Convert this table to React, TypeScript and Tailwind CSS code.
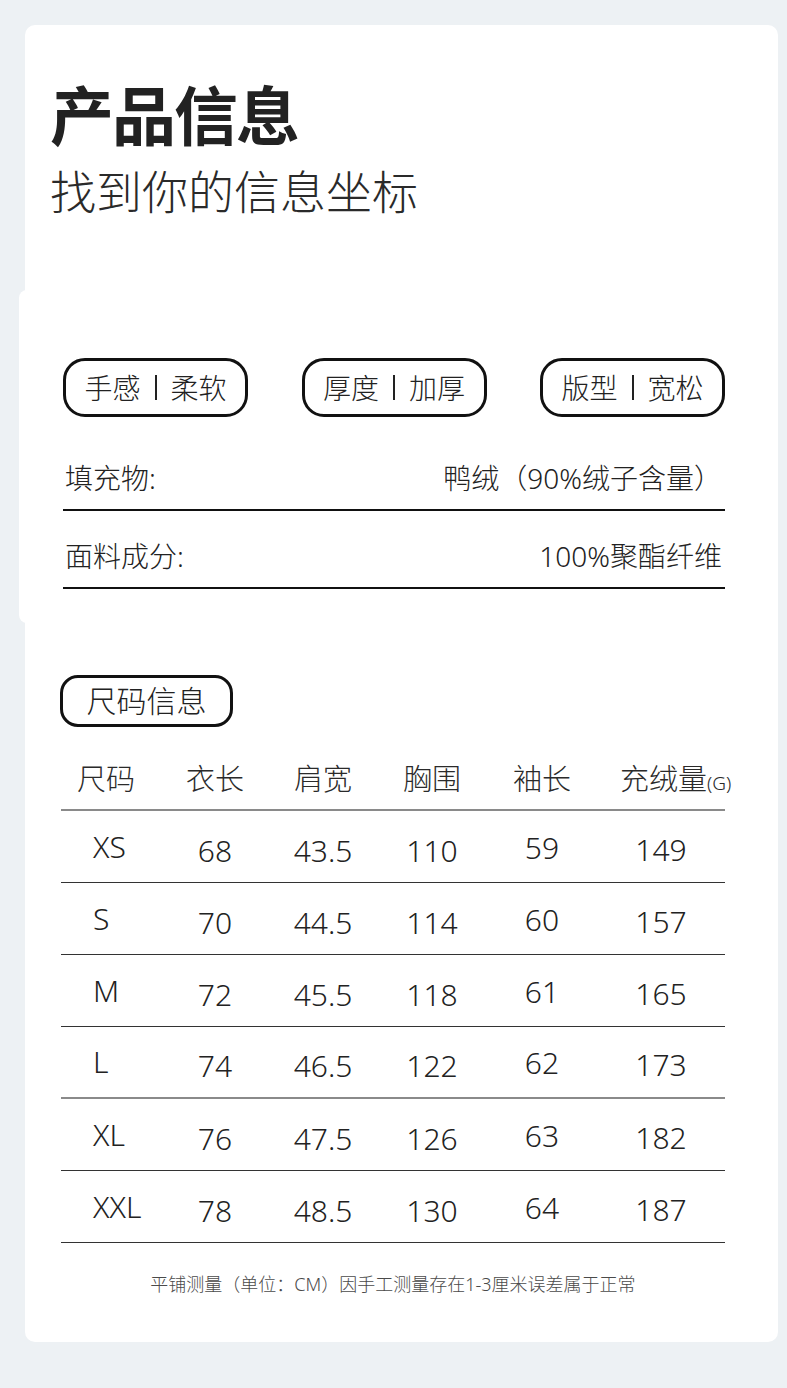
const sizes = [
  { size: 'XS', len: '68', shoulder: '43.5', chest: '110', sleeve: '59', down: '149', line: 'dark' },
  { size: 'S', len: '70', shoulder: '44.5', chest: '114', sleeve: '60', down: '157', line: 'dark' },
  { size: 'M', len: '72', shoulder: '45.5', chest: '118', sleeve: '61', down: '165', line: 'dark' },
  { size: 'L', len: '74', shoulder: '46.5', chest: '122', sleeve: '62', down: '173', line: 'gray' },
  { size: 'XL', len: '76', shoulder: '47.5', chest: '126', sleeve: '63', down: '182', line: 'dark' },
  { size: 'XXL', len: '78', shoulder: '48.5', chest: '130', sleeve: '64', down: '187', line: 'dark' },
];

const font = "font-['Noto_Sans','Noto_Sans_CJK_SC',sans-serif]";

function Tag({ left, right }: { left: string; right: string }) {
  return (
    <div className="flex h-[59px] w-[185px] items-center justify-center gap-[14px] rounded-[22px] border-[3px] border-[#111] text-[28px] font-light leading-none text-[#222]">
      <span>{left}</span>
      <span className="h-[25px] w-[2px] bg-[#222]" />
      <span>{right}</span>
    </div>
  );
}

function InfoRow({ label, value }: { label: string; value: string }) {
  return (
    <div className="flex items-end justify-between border-b-2 border-[#111] pb-[16px] pl-[2px] pr-[3px] text-[28px] font-light leading-[30px] text-[#222]">
      <span>{label}</span>
      <span>{value}</span>
    </div>
  );
}

const cols = 'grid grid-cols-[100px_108px_108px_110px_110px_128px] items-center';

export default function App() {
  return (
    <div className={`min-h-[1388px] bg-[#edf1f4] pt-[25px] ${font}`}>
      <div className="ml-[25px] flex h-[1317px] w-[753px] flex-col rounded-[10px] bg-white">
        <div className="pl-[25px] pt-[59px]">
          <h1 className="text-[64px] font-bold leading-[64px] tracking-[-2px] text-[#222]">产品信息</h1>
          <p className="mt-[20px] text-[46px] font-light leading-[46px] text-[#2a2a2a]">找到你的信息坐标</p>
        </div>

        <section className="-ml-[6px] mt-[76px] h-[333px] rounded-l-[8px] bg-white pl-[44px] pr-[53px] pt-[68px]">
          <div className="flex justify-between">
            <Tag left="手感" right="柔软" />
            <Tag left="厚度" right="加厚" />
            <Tag left="版型" right="宽松" />
          </div>
          <div className="mt-[46px]">
            <InfoRow label="填充物:" value="鸭绒（90%绒子含量）" />
          </div>
          <div className="mt-[30px]">
            <InfoRow label="面料成分:" value="100%聚酯纤维" />
          </div>
        </section>

        <div className="ml-[35px] mt-[52px] flex h-[52px] w-[173px] items-center justify-center rounded-[18px] border-[3px] border-[#111] text-[30px] font-light leading-none text-[#222]">
          尺码信息
        </div>

        <div className="ml-[36px] mt-[34px] w-[664px] font-light">
          <div className={`${cols} h-[50px] border-b-2 border-[#8a8a8a] pb-[13px] text-[29px] leading-none text-[#2a2a2a]`}>
            <span className="pl-[16px]">尺码</span>
            <span className="text-center">衣长</span>
            <span className="text-center">肩宽</span>
            <span className="text-center">胸围</span>
            <span className="text-center">袖长</span>
            <span className="whitespace-nowrap pl-[23px]">
              充绒量<span className="text-[19px]">(G)</span>
            </span>
          </div>
          {sizes.map((row) => (
            <div
              key={row.size}
              className={`${cols} h-[72px] text-[30px] leading-none text-[#222] ${
                row.line === 'gray' ? 'border-b-2 border-[#8a8a8a]' : 'border-b border-[#333]'
              }`}
            >
              <span className="pl-[32px]">{row.size}</span>
              <span className="pt-[8px] text-center">{row.len}</span>
              <span className="pt-[8px] text-center">{row.shoulder}</span>
              <span className="pt-[8px] text-center">{row.chest}</span>
              <span className="pt-[2px] text-center">{row.sleeve}</span>
              <span className="pt-[6px] text-center">{row.down}</span>
            </div>
          ))}
          <p className="mt-[32px] text-center text-[18px] leading-[18px] text-[#4a4a4a]">
            平铺测量（单位：CM）因手工测量存在1-3厘米误差属于正常
          </p>
        </div>
      </div>
    </div>
  );
}
